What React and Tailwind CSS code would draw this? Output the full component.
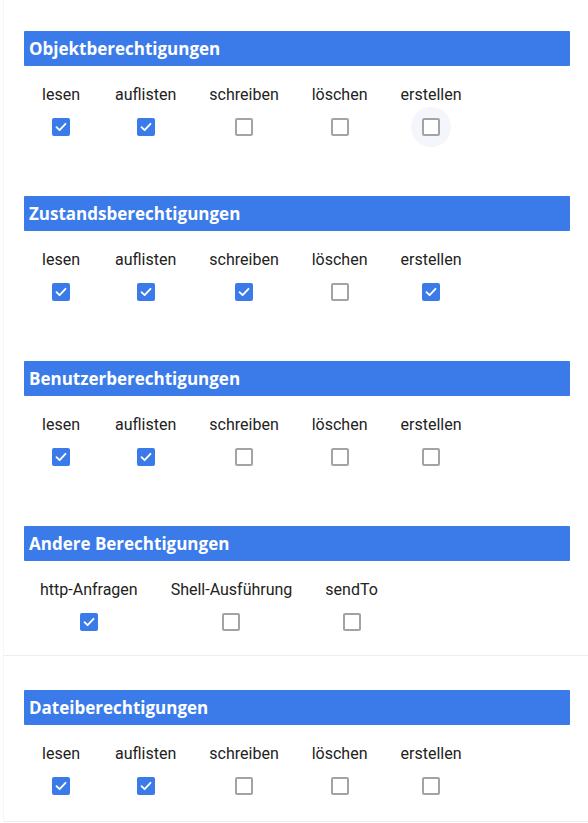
import { useState } from "react"

const crud = ["lesen", "auflisten", "schreiben", "löschen", "erstellen"]

const groups = [
    { id: "object", title: "Objektberechtigungen", keys: crud, checked: [true, true, false, false, false], focus: 4 },
    { id: "state", title: "Zustandsberechtigungen", keys: crud, checked: [true, true, true, false, true] },
    { id: "users", title: "Benutzerberechtigungen", keys: crud, checked: [true, true, false, false, false] },
    { id: "other", title: "Andere Berechtigungen", keys: ["http-Anfragen", "Shell-Ausführung", "sendTo"], checked: [true, false, false] },
    { id: "file", title: "Dateiberechtigungen", keys: crud, checked: [true, true, false, false, false] },
]

function CheckBox({ checked, focused, onChange }) {
    return (
        <button type="button" onClick={onChange} className="relative flex h-[18px] w-[18px] items-center justify-center">
            {focused && <span className="absolute -inset-[11px] rounded-full bg-[#f3f6fb]" />}
            {checked ? (
                <span className="relative flex h-[18px] w-[18px] items-center justify-center rounded-[2px] bg-[#3b7be9]">
                    <svg width="14" height="14" viewBox="0 0 14 14" fill="none">
                        <path d="M2.5 7.2 L5.6 10.2 L11.5 3.8" stroke="white" strokeWidth="1.8" strokeLinecap="round" strokeLinejoin="round" />
                    </svg>
                </span>
            ) : (
                <span className="relative h-[18px] w-[18px] rounded-[2px] border-2 border-[#a3a3a3] bg-white" />
            )}
        </button>
    )
}

function Group({ group, values, toggle }) {
    return (
        <div>
            <div className="flex h-[35px] items-center rounded-[1px] bg-[#3b7be9] pl-[5px] font-['Open_Sans',sans-serif] text-[17px] font-bold text-white">
                {group.title}
            </div>
            <div className="mt-[17px] flex gap-[1px]">
                {group.keys.map((key, i) => (
                    <div key={key} className="flex min-w-[74px] flex-col items-center px-4">
                        <span className="text-[16px] leading-6 text-[#222]">{key}</span>
                        <div className="mt-[11px]">
                            <CheckBox checked={values[i]} focused={group.focus === i} onChange={() => toggle(group.id, i)} />
                        </div>
                    </div>
                ))}
            </div>
        </div>
    )
}

export default function App() {
    const [state, setState] = useState(() =>
        Object.fromEntries(groups.map((g) => [g.id, g.checked]))
    )

    const toggle = (id, i) =>
        setState((s) => ({ ...s, [id]: s[id].map((v, j) => (j === i ? !v : v)) }))

    return (
        <div className="min-h-screen bg-white font-['Roboto',sans-serif]">
            <div className="ml-[3px] border-l border-[#f6f6f6]">
                <div className="pr-[18px] pl-5">
                    {groups.slice(0, 4).map((g, idx) => (
                        <div key={g.id} className={idx === 3 ? "pt-[31px] pb-6" : "pt-[31px] pb-[29px]"}>
                            <Group group={g} values={state[g.id]} toggle={toggle} />
                        </div>
                    ))}
                </div>
                <div className="border-t border-b border-[#ededed] pr-[18px] pt-[34px] pb-[26px] pl-5">
                    <Group group={groups[4]} values={state.file} toggle={toggle} />
                </div>
            </div>
        </div>
    )
}
